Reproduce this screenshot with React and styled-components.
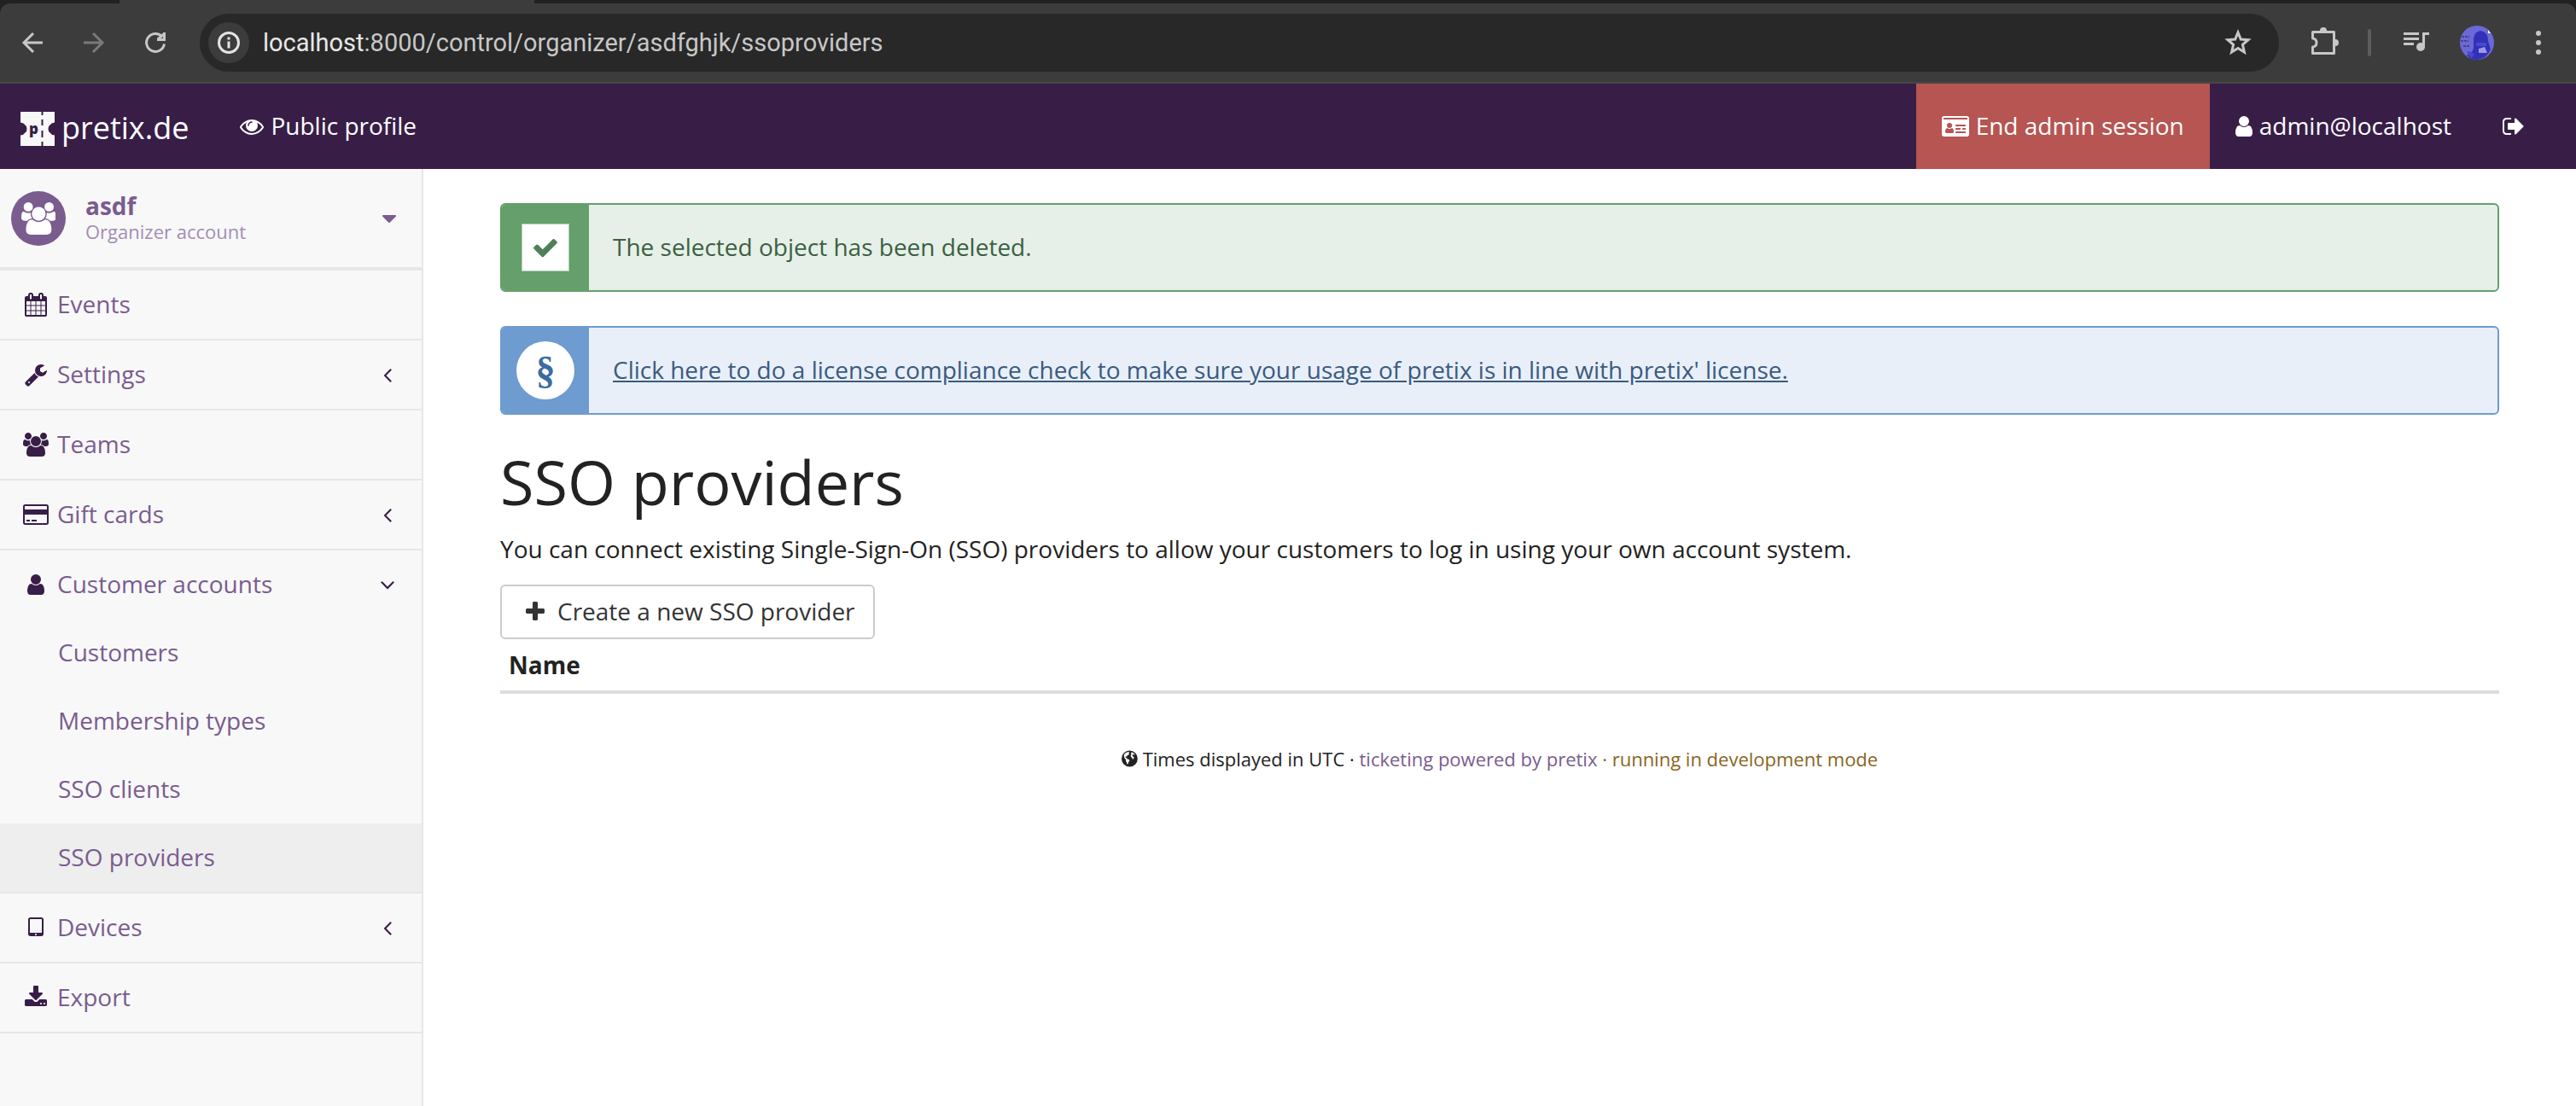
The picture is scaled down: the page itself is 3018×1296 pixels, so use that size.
import React from "react";
import styled, { createGlobalStyle } from "styled-components";

const GlobalStyle = createGlobalStyle`
  *, *::before, *::after { box-sizing: border-box; }
  body {
    margin: 0;
    background: #fff;
    color: #222;
    font-family: "Open Sans", "Noto Sans", sans-serif;
    font-size: 28px;
    line-height: 40px;
  }
`;

/* ---------- Icons (left edge, advance width, path; 1792 unit em) ---------- */

const GLYPHS = {
  eye: [0, 1792, "M1664 960q-152-236-381-353 61 104 61 225 0 185-131.5 316.5t-316.5 131.5-316.5-131.5-131.5-316.5q0-121 61-225-229 117-381 353 133 205 333.5 326.5t434.5 121.5 434.5-121.5 333.5-326.5zm-720-384q0-20-14-34t-34-14q-125 0-214.5 89.5t-89.5 214.5q0 20 14 34t34 14 34-14 14-34q0-86 61-147t147-61q20 0 34-14t14-34zm848 384q0 34-20 69-140 230-376.5 368.5t-499.5 138.5-499.5-139-376.5-368q-20-35-20-69t20-69q140-229 376.5-368t499.5-139 499.5 139 376.5 368q20 35 20 69z"],
  idCard: [0, 2048, "M160 128h1728q66 0 113 47t47 113v1216q0 66-47 113t-113 47h-1728q-66 0-113-47t-47-113v-1216q0-66 47-113t113-47zM160 256q-32 0-32 32v96h1792v-96q0-32-32-32zM341 1408h470q85 0 85-108 0-230-140-276-74 64-180 64t-180-64q-140 46-140 276 0 108 85 108zM576 1024a190 190 0 1 0 0-384 190 190 0 1 0 0 384zM1056 1280q-32 0-32 32v64q0 32 32 32h704q32 0 32-32v-64q0-32-32-32zM1056 1024q-32 0-32 32v64q0 32 32 32h320q32 0 32-32v-64q0-32-32-32zM1568 1024q-32 0-32 32v64q0 32 32 32h192q32 0 32-32v-64q0-32-32-32zM1056 768q-32 0-32 32v64q0 32 32 32h704q32 0 32-32v-64q0-32-32-32z"],
  user: [256, 1280, "M1536 1399q0 109-62.5 187t-150.5 78h-854q-88 0-150.5-78t-62.5-187q0-85 8.5-160.5t31.5-152 58.5-131 94-89 134.5-34.5q131 128 313 128t313-128q76 0 134.5 34.5t94 89 58.5 131 31.5 152 8.5 160.5zm-256-887q0 159-112.5 271.5t-271.5 112.5-271.5-112.5-112.5-271.5 112.5-271.5 271.5-112.5 271.5 112.5 112.5 271.5z"],
  signOut: [64, 1664, "M704 1440q0 4 1 20t.5 26.5-3 23.5-10 19.5-20.5 6.5h-320q-119 0-203.5-84.5t-84.5-203.5v-704q0-119 84.5-203.5t203.5-84.5h320q13 0 22.5 9.5t9.5 22.5q0 4 1 20t.5 26.5-3 23.5-10 19.5-20.5 6.5h-320q-66 0-113 47t-47 113v704q0 66 47 113t113 47h312l11.5 1 11.5 3 8 5.5 7 9 2 13.5zm928-544q0 26-19 45l-544 544q-19 19-45 19t-45-19-19-45v-288h-448q-26 0-45-19t-19-45v-384q0-26 19-45t45-19h448v-288q0-26 19-45t45-19 45 19l544 544q19 19 19 45z"],
  users: [64, 1920, "M657 896q-162 5-265 128h-134q-82 0-138-40.5t-56-118.5q0-353 124-353 6 0 43.5 21t97.5 42.5 119 21.5q67 0 133-23-5 37-5 66 0 139 81 256zm1071 637q0 120-73 189.5t-194 69.5h-874q-121 0-194-69.5t-73-189.5q0-53 3.5-103.5t14-109 26.5-108.5 43-97.5 62-81 85.5-53.5 111.5-20q10 0 43 21.5t73 48 107 48 135 21.5 135-21.5 107-48 73-48 43-21.5q61 0 111.5 20t85.5 53.5 62 81 43 97.5 26.5 108.5 14 109 3.5 103.5zm-1024-1277q0 106-75 181t-181 75-181-75-75-181 75-181 181-75 181 75 75 181zm704 384q0 159-112.5 271.5t-271.5 112.5-271.5-112.5-112.5-271.5 112.5-271.5 271.5-112.5 271.5 112.5 112.5 271.5zm576 225q0 78-56 118.5t-138 40.5h-134q-103-123-265-128 81-117 81-256 0-29-5-66 66 23 133 23 59 0 119-21.5t97.5-42.5 43.5-21q124 0 124 353zm-128-609q0 106-75 181t-181 75-181-75-75-181 75-181 181-75 181 75 75 181z"],
  calendar: [64, 1664, "M192 1664h288v-288h-288v288zm352 0h320v-288h-320v288zm-352-352h288v-320h-288v320zm352 0h320v-320h-320v320zm-352-384h288v-288h-288v288zm736 736h320v-288h-320v288zm-384-736h320v-288h-320v288zm768 736h288v-288h-288v288zm-384-352h320v-320h-320v320zm-352-864v-288q0-13-9.5-22.5t-22.5-9.5h-64q-13 0-22.5 9.5t-9.5 22.5v288q0 13 9.5 22.5t22.5 9.5h64q13 0 22.5-9.5t9.5-22.5zm736 864h288v-320h-288v320zm-384-384h320v-288h-320v288zm384 0h288v-288h-288v288zm32-480v-288q0-13-9.5-22.5t-22.5-9.5h-64q-13 0-22.5 9.5t-9.5 22.5v288q0 13 9.5 22.5t22.5 9.5h64q13 0 22.5-9.5t9.5-22.5zm384-64v1280q0 52-38 90t-90 38h-1408q-52 0-90-38t-38-90v-1280q0-52 38-90t90-38h128v-96q0-66 47-113t113-47h64q66 0 113 47t47 113v96h384v-96q0-66 47-113t113-47h64q66 0 113 47t47 113v96h128q52 0 90 38t38 90z"],
  wrench: [64, 1664, "M448 1472q0-26-19-45t-45-19-45 19-19 45 19 45 45 19 45-19 19-45zm644-420l-682 682q-37 37-90 37-52 0-91-37l-106-108q-38-36-38-90 0-53 38-91l681-681q39 98 114.5 173.5t173.5 114.5zm634-435q0 39-23 106-47 134-164.5 217.5t-258.5 83.5q-185 0-316.5-131.5t-131.5-316.5 131.5-316.5 316.5-131.5q58 0 121.5 16.5t107.5 46.5q16 11 16 28t-16 28l-293 169v224l193 107q5-3 79-48.5t135.5-81 70.5-35.5q15 0 23.5 10t8.5 25z"],
  creditCard: [0, 1920, "M1760 128q66 0 113 47t47 113v1216q0 66-47 113t-113 47h-1600q-66 0-113-47t-47-113v-1216q0-66 47-113t113-47h1600zm-1600 128q-13 0-22.5 9.5t-9.5 22.5v224h1664v-224q0-13-9.5-22.5t-22.5-9.5h-1600zm1600 1280q13 0 22.5-9.5t9.5-22.5v-608h-1664v608q0 13 9.5 22.5t22.5 9.5h1600zm-1504-128v-128h256v128h-256zm384 0v-128h384v128h-384z"],
  tablet: [320, 1152, "M960 1408q0-26-19-45t-45-19-45 19-19 45 19 45 45 19 45-19 19-45zm384-160v-960q0-13-9.5-22.5t-22.5-9.5h-832q-13 0-22.5 9.5t-9.5 22.5v960q0 13 9.5 22.5t22.5 9.5h832q13 0 22.5-9.5t9.5-22.5zm128-960v1088q0 66-47 113t-113 47h-832q-66 0-113-47t-47-113v-1088q0-66 47-113t113-47h832q66 0 113 47t47 113z"],
  download: [64, 1664, "M1344 1344q0-26-19-45t-45-19-45 19-19 45 19 45 45 19 45-19 19-45zm256 0q0-26-19-45t-45-19-45 19-19 45 19 45 45 19 45-19 19-45zm128-224v320q0 40-28 68t-68 28h-1472q-40 0-68-28t-28-68v-320q0-40 28-68t68-28h465l135 136q58 56 136 56t136-56l136-136h464q40 0 68 28t28 68zm-325-569q17 41-14 70l-448 448q-18 19-45 19t-45-19l-448-448q-31-29-14-70 17-39 59-39h256v-448q0-26 19-45t45-19h256q26 0 45 19t19 45v448h256q42 0 59 39z"],
  angleLeft: [576, 640, "M1203 544q0 13-10 23l-393 393 393 393q10 10 10 23t-10 23l-50 50q-10 10-23 10t-23-10l-466-466q-10-10-10-23t10-23l466-466q10-10 23-10t23 10l50 50q10 10 10 23z"],
  angleDown: [320, 1152, "M1395 736q0 13-10 23l-466 466q-10 10-23 10t-23-10l-466-466q-10-10-10-23t10-23l50-50q10-10 23-10t23 10l393 393 393-393q10-10 23-10t23 10l50 50q10 10 10 23z"],
  caretDown: [384, 1024, "M1408 704q0 26-19 45l-448 448q-19 19-45 19t-45-19l-448-448q-19-19-19-45t19-45 45-19h896q26 0 45 19t19 45z"],
  plus: [192, 1408, "M1600 736v192q0 40-28 68t-68 28h-416v416q0 40-28 68t-68 28h-192q-40 0-68-28t-28-68v-416h-416q-40 0-68-28t-28-68v-192q0-40 28-68t68-28h416v-416q0-40 28-68t68-28h192q40 0 68 28t28 68v416h416q40 0 68 28t28 68z"],
  check: [0, 1792, "M1671 566q0 40-28 68l-724 724-136 136q-28 28-68 28t-68-28l-136-136-362-362q-28-28-28-68t28-68l136-136q28-28 68-28t68 28l294 295 656-657q28-28 68-28t68 28l136 136q28 28 28 68z"],
  globe: [128, 1536, "M896 128a768 768 0 1 0 0 1536 768 768 0 1 0 0-1536zM520 350q130-90 290-110l60 60-70 70 60 50-50 110-130 50-40 110-110-10-30 100 100 30 60 100 190 60 50 130-110 120-40 160-90 60-40-180-80-120 10-160-130-120-60-180 0-150q60-100 160-180zM1080 270q220 70 340 240l-120 10-60-50-70 60-10 120 100 40 60 110-80 150-70-30-40-130-110-60-10-170 60-90-50-70z"],
};

const GlyphSvg = styled.svg`
  display: block;
  flex: none;
  height: ${(p) => p.$size}px;
  fill: currentColor;
  fill-rule: evenodd;
`;

function Glyph({ name, size = 28 }) {
  const [x, width, path] = GLYPHS[name];
  return (
    <GlyphSvg $size={size} viewBox={`${x} 0 ${width} 1792`} aria-hidden="true">
      <path d={path} />
    </GlyphSvg>
  );
}

/* Text set beside an icon, raised to sit on the icon's optical centre */
const Label = styled.span`
  padding-bottom: 2px;
  line-height: 38px;
`;

/* ---------- Browser toolbar ---------- */

const BrowserChrome = styled.div`
  background: #1f2221;
`;

const TabStrip = styled.div`
  display: flex;
  height: 4px;
`;

const ActiveTabEdge = styled.div`
  width: 486px;
  margin-left: 140px;
  background: #3c3c3c;
`;

const Toolbar = styled.div`
  display: flex;
  align-items: center;
  height: 94px;
  padding: 0 22px 0 16px;
  background: #3c3c3c;
  border-bottom: 2px solid #474747;
  border-radius: 12px 12px 0 0;
  color: #c7c7c7;
`;

const ToolButton = styled.button`
  display: grid;
  place-items: center;
  flex: none;
  width: ${(p) => p.$width || 44}px;
  height: 44px;
  margin: 0 ${(p) => p.$gap || 0}px 0 0;
  padding: 0;
  border: 0;
  border-radius: 22px;
  background: none;
  color: ${(p) => (p.$dim ? "#7a7a7a" : "inherit")};
`;

const Omnibox = styled.div`
  display: flex;
  flex: 1;
  align-items: center;
  height: 68px;
  margin-right: 32px;
  padding: 0 28px 0 10px;
  border-radius: 34px;
  background: #282828;
`;

const SiteInfo = styled.button`
  display: grid;
  place-items: center;
  width: 48px;
  height: 48px;
  padding: 0;
  border: 0;
  border-radius: 24px;
  background: #3c3c3c;
  color: #e3e3e3;
`;

const Address = styled.div`
  flex: 1;
  margin-left: 16px;
  font-family: Roboto, "Liberation Sans", sans-serif;
  font-size: 29px;
  color: #c7c7c7;
`;

const Host = styled.span`
  color: #e8e8e8;
`;

const Divider = styled.span`
  flex: none;
  width: 4px;
  height: 32px;
  margin: 0 30px 0 26px;
  border-radius: 2px;
  background: #5d5d5d;
`;

const LineIcon = styled.svg`
  display: block;
  width: 36px;
  height: 36px;
  fill: none;
  stroke: currentColor;
  stroke-width: 3;
`;

function Browser() {
  return (
    <BrowserChrome>
      <TabStrip><ActiveTabEdge /></TabStrip>
      <Toolbar>
        <ToolButton $gap={28} aria-label="Back">
          <LineIcon viewBox="0 0 36 36"><path d="M30 18H8M19 7L8 18l11 11" /></LineIcon>
        </ToolButton>
        <ToolButton $gap={28} $dim aria-label="Forward">
          <LineIcon viewBox="0 0 36 36"><path d="M6 18h22M17 7l11 11-11 11" /></LineIcon>
        </ToolButton>
        <ToolButton $gap={30} aria-label="Reload">
          <LineIcon viewBox="0 0 36 36"><path d="M26 11A10.500 10.500 0 1 0 28.500 19.500M20 14.500h8.500V6M21 14l7-6" /></LineIcon>
        </ToolButton>
        <Omnibox>
          <SiteInfo aria-label="Site information">
            <LineIcon viewBox="0 0 36 36"><circle cx="18" cy="18" r="11.500" /><path d="M18 16.500v8M18 11.500v3" /></LineIcon>
          </SiteInfo>
          <Address><Host>localhost</Host>:8000/control/organizer/asdfghjk/ssoproviders</Address>
          <ToolButton $width={40} aria-label="Bookmark this tab">
            <LineIcon viewBox="0 0 36 36"><path d="M18 6l3.300 8 8.700.7-6.600 5.700 2 8.600-7.400-4.600-7.400 4.600 2-8.600L6 14.700l8.700-.7z" /></LineIcon>
          </ToolButton>
        </Omnibox>
        <ToolButton $gap={2} aria-label="Extensions">
          <LineIcon viewBox="0 0 36 36">
            <path d="M3.500 5.500h25v25h-25v-7.500q4.500-.5 4.500-5t-4.500-5z" strokeLinejoin="round" />
            <path d="M12 4a4 4 0 0 1 8 0zM30 14a4 4 0 0 1 0 8z" fill="currentColor" stroke="none" />
          </LineIcon>
        </ToolButton>
        <Divider />
        <ToolButton $gap={30} aria-label="Media controls">
          <LineIcon viewBox="0 0 36 36"><path d="M4 7.500h18M4 13.500h18M4 19.500h12M27.500 23V7.500H34" /><circle cx="24" cy="23" r="5" fill="currentColor" stroke="none" /></LineIcon>
        </ToolButton>
        <ToolButton $gap={30} $width={40} aria-label="Profile">
          <svg width="40" height="40" viewBox="0 0 40 40">
            <circle cx="20" cy="20" r="20" fill="#6a69d6" />
            <path d="M16 15q1-8 8-9 9 1 9 12l3 10q-5 11-16 12-8 0-12-6 7-1 8-8z" fill="#3331b8" />
            <path d="M8 30q6 0 9 4l-3 4q-4-3-6-8zM19 20h12v4H19z" fill="#4a48cc" />
            <path d="M22 27l7-2 3 7h-10z" fill="#9c9be6" />
            <path d="M2 13h9M1 18h9M4 24h7" stroke="#4b3f94" strokeWidth="2" strokeDasharray="3 1" />
            <path d="M33 5l3 4h-3z" fill="#fff" />
          </svg>
        </ToolButton>
        <ToolButton aria-label="Browser menu">
          <LineIcon viewBox="0 0 36 36"><g fill="currentColor" stroke="none"><circle cx="18" cy="7" r="3" /><circle cx="18" cy="18" r="3" /><circle cx="18" cy="29" r="3" /></g></LineIcon>
        </ToolButton>
      </Toolbar>
    </BrowserChrome>
  );
}

/* ---------- Top navigation ---------- */

const Navbar = styled.nav`
  display: flex;
  justify-content: space-between;
  height: 100px;
  padding-right: 30px;
  background: #381e47;
`;

const NavGroup = styled.div`
  display: flex;
`;

const NavLink = styled.a`
  display: flex;
  align-items: center;
  gap: 8px;
  padding: 0 30px;
  background: ${(p) => (p.$danger ? "#b65552" : "none")};
  color: #fff;
  text-decoration: none;
`;

const Brand = styled.a`
  display: flex;
  align-items: center;
  gap: 8px;
  padding: 6px 30px 0 24px;
  color: #fff;
  font-size: 36px;
  text-decoration: none;
`;

const LogoMark = styled.svg`
  display: block;
  width: 40px;
  height: 40px;
`;

function Logo() {
  return (
    <LogoMark viewBox="0 0 40 40" aria-hidden="true">
      <path d="M0 0h40v12.500q-4 .5-5.500 3-2 1-2 4.500t2 4.500q1.500 2.500 5.500 3V40H0V27.500q4-.5 5.500-3 2-1 2-4.500t-2-4.500q-1.500-2.500-5.500-3z" fill="#f8f8f8" />
      <path d="M25.500 0v4M25.500 9v7M25.500 22v8M25.500 35v5" stroke="#381e47" strokeWidth="2" />
      <text x="10" y="26" fontFamily="Open Sans, sans-serif" fontWeight="800" fontSize="17" fill="#381e47">p</text>
    </LogoMark>
  );
}

/* ---------- Sidebar ---------- */

const Shell = styled.div`
  display: flex;
  min-height: calc(100vh - 198px);
`;

const Sidebar = styled.aside`
  flex: none;
  width: 496px;
  background: #f8f8f8;
  border-right: 2px solid #e7e7e7;
`;

const Account = styled.button`
  display: flex;
  align-items: center;
  gap: 23px;
  width: 100%;
  height: 119px;
  padding: 0 30px 0 13px;
  border: 0;
  border-bottom: 4px solid #e7e7e7;
  background: none;
  color: #7a5c8f;
  font: inherit;
  text-align: left;
`;

const Avatar = styled.span`
  display: grid;
  place-items: center;
  flex: none;
  width: 64px;
  height: 64px;
  border-radius: 32px;
  background: #7a5c8f;
  color: #fff;
`;

const AccountText = styled.span`
  display: flex;
  flex: 1;
  flex-direction: column;
  line-height: 30px;
`;

const AccountKind = styled.span`
  color: #a38db3;
  font-size: 22px;
`;

const Menu = styled.ul`
  margin: 0;
  padding: 0;
  list-style: none;
`;

const MenuItem = styled.li`
  border-bottom: 2px solid #e7e7e7;
`;

const MenuLink = styled.a`
  display: flex;
  align-items: center;
  padding: 20px 22px 20px 24px;
  color: #7a5c8f;
  text-decoration: none;
`;

const SubLink = styled(MenuLink)`
  padding-left: 68px;
  background: ${(p) => (p.$active ? "#eee" : "none")};
`;

const IconCell = styled.span`
  display: grid;
  place-items: center;
  width: 36px;
  color: #381e47;
`;

const MenuLabel = styled(Label)`
  flex: 1;
  margin-left: 7px;
`;

const menu = [
  { label: "Events", icon: "calendar" },
  { label: "Settings", icon: "wrench", arrow: "angleLeft" },
  { label: "Teams", icon: "users" },
  { label: "Gift cards", icon: "creditCard", arrow: "angleLeft" },
  {
    label: "Customer accounts",
    icon: "user",
    arrow: "angleDown",
    children: ["Customers", "Membership types", "SSO clients", "SSO providers"],
  },
  { label: "Devices", icon: "tablet", arrow: "angleLeft" },
  { label: "Export", icon: "download" },
];

function SideMenu() {
  return (
    <Sidebar>
      <Account>
        <Avatar><Glyph name="users" size={38} /></Avatar>
        <AccountText>
          <strong>asdf</strong>
          <AccountKind>Organizer account</AccountKind>
        </AccountText>
        <Glyph name="caretDown" />
      </Account>
      <Menu>
        {menu.map((item) => (
          <MenuItem key={item.label}>
            <MenuLink href="#">
              <IconCell><Glyph name={item.icon} /></IconCell>
              <MenuLabel>{item.label}</MenuLabel>
              {item.arrow && <IconCell><Glyph name={item.arrow} /></IconCell>}
            </MenuLink>
            {item.children && (
              <Menu>
                {item.children.map((child) => (
                  <li key={child}>
                    <SubLink href="#" $active={child === "SSO providers"}><Label>{child}</Label></SubLink>
                  </li>
                ))}
              </Menu>
            )}
          </MenuItem>
        ))}
      </Menu>
    </Sidebar>
  );
}

/* ---------- Main content ---------- */

const Content = styled.main`
  flex: 1;
  padding: 40px 90px;
`;

const Alert = styled.div`
  display: flex;
  height: 104px;
  margin-bottom: 40px;
  overflow: hidden;
  border: 2px solid ${(p) => p.$accent};
  border-radius: 6px;
  background: ${(p) => p.$tint};
  color: ${(p) => p.$ink};
`;

const AlertBadge = styled.div`
  display: grid;
  place-items: center;
  width: 102px;
  background: ${(p) => p.$accent};
`;

const AlertBody = styled.div`
  display: flex;
  align-items: center;
  padding: 0 28px;
`;

const AlertLink = styled.a`
  color: inherit;
`;

const CheckBadge = styled.span`
  display: grid;
  place-items: center;
  width: 56px;
  height: 56px;
  border: 1px solid #b2cfb6;
  background: #fff;
  color: #4f7f58;
`;

const SectionBadge = styled.span`
  display: grid;
  place-items: center;
  width: 68px;
  height: 68px;
  border-radius: 34px;
  background: #fff;
  color: #3c6ba3;
  font-family: "Liberation Serif", serif;
  font-size: 46px;
  font-weight: 700;
`;

const Title = styled.h1`
  margin: 0 0 21px;
  font-size: 72px;
  font-weight: 400;
  line-height: 76px;
`;

const Lead = styled.p`
  margin: 0 0 22px;
`;

const CreateButton = styled.button`
  display: flex;
  align-items: center;
  gap: 15px;
  height: 64px;
  padding: 0 21px 0 28px;
  border: 2px solid #ccc;
  border-radius: 6px;
  background: #fff;
  color: #333;
  font: inherit;
`;

const ProviderTable = styled.table`
  width: 100%;
  border-collapse: collapse;
`;

const HeadCell = styled.th`
  padding: 10px;
  border-bottom: 4px solid #ddd;
  text-align: left;
`;

const Footer = styled.footer`
  display: flex;
  justify-content: center;
  align-items: center;
  gap: 6px;
  margin-top: 56px;
  font-size: 22px;
  color: #222;
`;

const FooterLink = styled.a`
  color: #7a5c8f;
  text-decoration: none;
`;

const DevMode = styled.span`
  color: #8a6422;
`;

export default function App() {
  return (
    <>
      <GlobalStyle />
      <Browser />
      <Navbar>
        <NavGroup>
          <Brand href="#"><Logo /><Label>pretix.de</Label></Brand>
          <NavLink href="#"><Glyph name="eye" /><Label>Public profile</Label></NavLink>
        </NavGroup>
        <NavGroup>
          <NavLink href="#" $danger><Glyph name="idCard" /><Label>End admin session</Label></NavLink>
          <NavLink href="#"><Glyph name="user" /><Label>admin@localhost</Label></NavLink>
          <NavLink href="#" aria-label="Log out"><Glyph name="signOut" /></NavLink>
        </NavGroup>
      </Navbar>
      <Shell>
        <SideMenu />
        <Content>
          <Alert $accent="#659f6c" $tint="#e6f0e8" $ink="#3c5f42">
            <AlertBadge $accent="#659f6c"><CheckBadge><Glyph name="check" size={32} /></CheckBadge></AlertBadge>
            <AlertBody><Label>The selected object has been deleted.</Label></AlertBody>
          </Alert>
          <Alert $accent="#6e9bd0" $tint="#e8eff8" $ink="#3b5a80">
            <AlertBadge $accent="#6e9bd0"><SectionBadge>§</SectionBadge></AlertBadge>
            <AlertBody>
              <Label>
                <AlertLink href="#">Click here to do a license compliance check to make sure your usage of pretix is in line with pretix' license.</AlertLink>
              </Label>
            </AlertBody>
          </Alert>
          <Title>SSO providers</Title>
          <Lead>You can connect existing Single-Sign-On (SSO) providers to allow your customers to log in using your own account system.</Lead>
          <CreateButton><Glyph name="plus" /><Label>Create a new SSO provider</Label></CreateButton>
          <ProviderTable>
            <thead><tr><HeadCell scope="col">Name</HeadCell></tr></thead>
          </ProviderTable>
          <Footer>
            <Glyph name="globe" size={22} />
            <span>
              Times displayed in UTC · <FooterLink href="#">ticketing powered by pretix</FooterLink> <DevMode>· running in development mode</DevMode>
            </span>
          </Footer>
        </Content>
      </Shell>
    </>
  );
}
